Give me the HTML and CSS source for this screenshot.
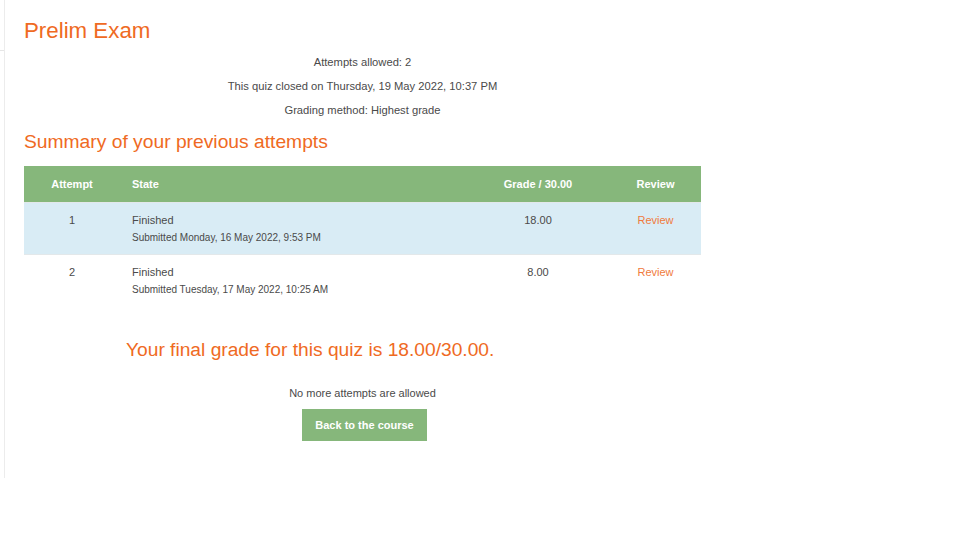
FILE: index.html
```html
<!DOCTYPE html>
<html>
<head>
<meta charset="utf-8">
<link rel="stylesheet" href="styles.css">
</head>
<body>
<div class="page">
  <div class="rail"><div class="rail-top"></div></div>
  <main class="main">
    <h1 class="title">Prelim Exam</h1>
    <div class="info">
      <p>Attempts allowed: 2</p>
      <p>This quiz closed on Thursday, 19 May 2022, 10:37 PM</p>
      <p>Grading method: Highest grade</p>
    </div>
    <h2 class="summary">Summary of your previous attempts</h2>
    <table class="attempts">
      <thead>
        <tr>
          <th class="c-attempt">Attempt</th>
          <th class="c-state">State</th>
          <th class="c-grade">Grade / 30.00</th>
          <th class="c-review">Review</th>
        </tr>
      </thead>
      <tbody>
        <tr class="odd">
          <td class="c-attempt">1</td>
          <td class="c-state"><div>Finished</div><div class="sub">Submitted Monday, 16 May 2022, 9:53 PM</div></td>
          <td class="c-grade">18.00</td>
          <td class="c-review"><a href="#">Review</a></td>
        </tr>
        <tr>
          <td class="c-attempt">2</td>
          <td class="c-state"><div>Finished</div><div class="sub">Submitted Tuesday, 17 May 2022, 10:25 AM</div></td>
          <td class="c-grade">8.00</td>
          <td class="c-review"><a href="#">Review</a></td>
        </tr>
      </tbody>
    </table>
    <h3 class="final">Your final grade for this quiz is 18.00/30.00.</h3>
    <div class="actions">
      <p>No more attempts are allowed</p>
      <button class="btn" type="button">Back to the course</button>
    </div>
  </main>
</div>
</body>
</html>
```
FILE: styles.css
```css
html, body {
  margin: 0;
  padding: 0;
  background: #fff;
}
body {
  font-family: "Liberation Sans", Arial, sans-serif;
  color: #4a4a4a;
}
.page {
  display: flex;
  align-items: flex-start;
}
.rail {
  width: 4px;
  height: 478px;
  border-right: 1px solid #ececec;
  flex: none;
}
.rail-top {
  margin-top: 50px;
  height: 1px;
  background: #e6e6e6;
}
.main {
  width: 677px;
  margin-left: 19px;
}
.title {
  margin: 18px 0 0;
  font-size: 22.3px;
  line-height: 26px;
  font-weight: normal;
  color: #ef6a23;
}
.info {
  margin-top: 6px;
  text-align: center;
  font-size: 11.2px;
}
.info p {
  margin: 0;
  line-height: 24px;
}
.summary {
  margin: 8px 0 0;
  font-size: 19.25px;
  line-height: 24px;
  font-weight: normal;
  color: #ef6a23;
}
.attempts {
  margin-top: 12px;
  width: 677px;
  border-collapse: collapse;
  font-size: 11px;
  table-layout: fixed;
}
.attempts th {
  background: #86b77b;
  color: #fff;
  font-weight: bold;
  height: 36px;
  padding: 0;
  text-align: left;
}
.attempts td {
  vertical-align: top;
  padding: 11px 0 10px;
  height: 30px;
  line-height: 13px;
}
.attempts tbody tr {
  border-top: 1px solid #e3e8ea;
}
.attempts tr.odd {
  background: #d9ecf5;
}
.c-attempt { width: 96px; text-align: center !important; }
.c-state { width: 346px; padding-left: 12px !important; }
.c-grade { width: 120px; text-align: center !important; }
.c-review { text-align: center !important; padding-left: 12px !important; }
.sub {
  font-size: 10px;
  margin-top: 4px;
}
.c-review a {
  color: #f07a3c;
  text-decoration: none;
}
.final {
  margin: 32px 0 0 102px;
  font-size: 19.2px;
  line-height: 24px;
  font-weight: normal;
  color: #ef6a23;
}
.actions {
  margin-top: 23px;
  text-align: center;
  font-size: 11px;
}
.actions p {
  margin: 0;
  line-height: 16px;
}
.btn {
  margin-top: 8px;
  margin-left: 4px;
  width: 125px;
  height: 32px;
  border: 0;
  background: #86b77b;
  color: #fff;
  font-family: "Liberation Sans", Arial, sans-serif;
  font-weight: bold;
  font-size: 11px;
  padding: 0;
}
```
